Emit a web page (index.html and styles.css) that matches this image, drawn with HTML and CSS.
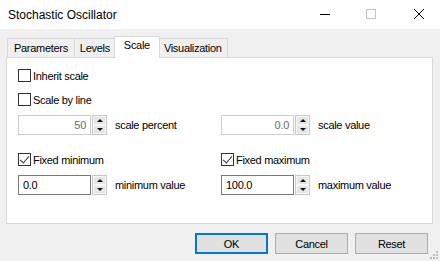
FILE: index.html
```html
<!DOCTYPE html>
<html lang="en">
<head>
    <meta charset="UTF-8">
    <title>Stochastic Oscillator</title>
    <link rel="stylesheet" href="styles.css">
</head>
<body>
    <div class="window">
        <div class="titlebar">
            <span class="title">Stochastic Oscillator</span>
            <div class="controls">
                <svg class="ctl" width="46" height="29" viewBox="0 0 46 29"><path d="M18 14.5h10" stroke="#000" stroke-width="1"/></svg>
                <svg class="ctl" width="46" height="29" viewBox="0 0 46 29"><rect x="18.5" y="9.5" width="9" height="9" fill="none" stroke="#c4c4c4"/></svg>
                <svg class="ctl" width="46" height="29" viewBox="0 0 46 29"><path d="M20 9l10 10M30 9l-10 10" stroke="#000" stroke-width="1"/></svg>
            </div>
        </div>

        <div class="content">
            <ul class="tabs">
                <li class="tab">Parameters</li>
                <li class="tab">Levels</li>
                <li class="tab on">Scale</li>
                <li class="tab">Visualization</li>
            </ul>

            <div class="panel">
                <label class="check"><span class="box"></span>Inherit scale</label>
                <label class="check"><span class="box"></span>Scale by line</label>

                <div class="cols">
                    <div class="field">
                        <div class="spin disabled"><span class="input">50</span><span class="arrows"><i class="up"></i><i class="down"></i></span></div>
                        <span class="label">scale percent</span>
                    </div>
                    <div class="field">
                        <div class="spin disabled"><span class="input">0.0</span><span class="arrows"><i class="up"></i><i class="down"></i></span></div>
                        <span class="label">scale value</span>
                    </div>
                </div>

                <div class="cols checks">
                    <label class="check"><span class="box checked"></span>Fixed minimum</label>
                    <label class="check"><span class="box checked"></span>Fixed maximum</label>
                </div>

                <div class="cols">
                    <div class="field">
                        <div class="spin"><span class="input">0.0</span><span class="arrows"><i class="up"></i><i class="down"></i></span></div>
                        <span class="label">minimum value</span>
                    </div>
                    <div class="field">
                        <div class="spin"><span class="input">100.0</span><span class="arrows"><i class="up"></i><i class="down"></i></span></div>
                        <span class="label">maximum value</span>
                    </div>
                </div>
            </div>

            <div class="footer">
                <button class="btn default">OK</button>
                <button class="btn">Cancel</button>
                <button class="btn">Reset</button>
            </div>
        </div>

        <svg class="grip" width="10" height="10" viewBox="0 0 10 10">
            <rect x="7" y="1" width="2" height="2" fill="#bcbcbc"/>
            <rect x="4" y="4" width="2" height="2" fill="#bcbcbc"/>
            <rect x="7" y="4" width="2" height="2" fill="#bcbcbc"/>
            <rect x="1" y="7" width="2" height="2" fill="#bcbcbc"/>
            <rect x="4" y="7" width="2" height="2" fill="#bcbcbc"/>
            <rect x="7" y="7" width="2" height="2" fill="#bcbcbc"/>
        </svg>
    </div>
</body>
</html>
```

FILE: styles.css
```css
*{
    box-sizing: border-box;
}
body{
    margin: 0;
    font-family: "Liberation Sans", Arial, sans-serif;
    font-size: 11px;
    letter-spacing: -0.3px;
    color: #000;
}
.window{
    position: relative;
    width: 440px;
    height: 261px;
    background: #f0f0f0;
}

/* title bar */
.titlebar{
    height: 29px;
    background: #fff;
    display: flex;
    align-items: center;
    justify-content: space-between;
    padding-left: 8px;
}
.title{
    font-size: 12px;
    letter-spacing: 0;
}
.controls{
    display: flex;
    align-self: flex-start;
}
.ctl{
    display: block;
}

/* tabs */
.content{
    padding: 7px 7px 0 6px;
}
.tabs{
    list-style: none;
    margin: 0 0 0 1px;
    padding: 0;
    display: flex;
    align-items: flex-end;
    height: 21px;
}
.tab{
    height: 19px;
    padding: 2px 5px 0 5px;
    border: 1px solid #d9d9d9;
    border-bottom: none;
    background: #f0f0f0;
    margin-left: -1px;
    line-height: 15px;
}
.tab:first-child{
    margin-left: 0;
    padding: 2px 6px 0 6px;
}
.tab.on{
    position: relative;
    height: 22px;
    margin-bottom: -1px;
    background: #fff;
    padding: 0 9px;
    margin-left: -2px;
    margin-right: -1px;
    z-index: 1;
    line-height: 16px;
}

/* panel */
.panel{
    height: 167px;
    width: 427px;
    background: #fff;
    border: 1px solid #d9d9d9;
    padding: 11px 0 0 11px;
}
.check{
    display: flex;
    align-items: center;
    height: 13px;
    margin-bottom: 11px;
    gap: 2px;
}
.check + .cols{
    margin-top: -2px;
}
.box{
    width: 13px;
    height: 13px;
    border: 1px solid #333;
    background: #fff;
    position: relative;
}
.box.checked::after{
    content: "";
    position: absolute;
    left: 3px;
    top: 0;
    width: 4px;
    height: 8px;
    border: solid #333;
    border-width: 0 1px 1px 0;
    transform: rotate(40deg);
}
.cols{
    display: grid;
    grid-template-columns: 203px 203px;
}
.cols.checks{
    margin-top: 18px;
}
.cols.checks .check{
    margin-bottom: 9px;
}
.field{
    display: flex;
    align-items: center;
    height: 20px;
}
.spin{
    display: flex;
    align-items: center;
}
.input{
    width: 73px;
    height: 20px;
    border: 1px solid #7a7a7a;
    padding: 0 4px;
    line-height: 18px;
    background: #fff;
}
.spin.disabled .input{
    border-color: #ccc;
    color: #6d6d6d;
    text-align: right;
}
.arrows{
    display: flex;
    flex-direction: column;
    width: 15px;
    height: 20px;
    margin-left: 1px;
    border: 1px solid #c8c8c8;
    background: #e6e6e6;
}
.arrows i{
    flex: 1;
    position: relative;
    border: 1px solid #f6f6f6;
}
.arrows i::after{
    content: "";
    position: absolute;
    left: 3px;
    border-left: 3px solid transparent;
    border-right: 3px solid transparent;
}
.arrows .up::after{
    top: 2px;
    border-bottom: 3px solid #111;
}
.arrows .down::after{
    top: 2px;
    border-top: 3px solid #111;
}
.label{
    margin-left: 8px;
}

/* buttons */
.footer{
    display: flex;
    justify-content: flex-end;
    gap: 7px;
    margin-top: 9px;
    padding-right: 5px;
}
.btn{
    width: 73px;
    height: 21px;
    font-family: inherit;
    font-size: 11px;
    letter-spacing: -0.3px;
    color: #000;
    background: #e1e1e1;
    border: 1px solid #adadad;
    padding: 0;
}
.btn.default{
    border: 2px solid #0078d7;
}
.grip{
    position: absolute;
    right: 1px;
    bottom: 1px;
}
```
